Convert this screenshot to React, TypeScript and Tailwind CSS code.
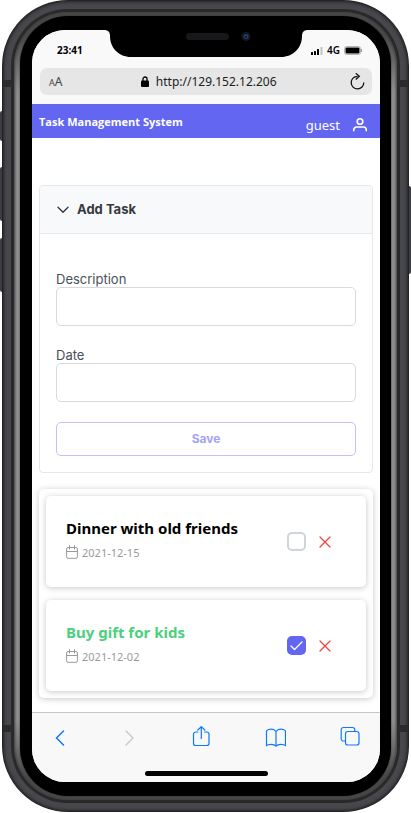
import { useState } from "react";
import type { ReactNode } from "react";

type Task = { id: number; title: string; date: string; done: boolean };

const initialTasks: Task[] = [
  { id: 1, title: "Dinner with old friends", date: "2021-12-15", done: false },
  { id: 2, title: "Buy gift for kids", date: "2021-12-02", done: true },
];

/* Black camera housing hanging from the top edge of the display. */
function Notch() {
  return (
    <svg
      className="absolute left-1/2 top-0 -translate-x-1/2"
      width="204"
      height="28"
      viewBox="0 0 204 28"
      aria-hidden="true"
    >
      <path d="M0 0h204c-4 0-6 2-6 6 0 12-9 21-21 21H27C15 27 6 18 6 6c0-4-2-6-6-6z" fill="#000" />
      <rect x="82" y="3" width="43" height="7" rx="3.5" fill="#17171a" />
      <circle cx="142" cy="6.500" r="4.500" fill="#14161c" />
      <circle cx="142" cy="6.500" r="2.500" fill="#1b3c70" />
      <circle cx="142" cy="7" r="1" fill="#0a1020" />
    </svg>
  );
}

function StatusBar() {
  return (
    <div className="flex h-[38px] items-center justify-between pt-[3px] pr-[18px] pl-[25px]">
      <span className="font-['Noto_Sans',sans-serif] text-[10px] font-bold text-black">23:41</span>
      <div className="flex items-center gap-[4px]">
        <svg width="12" height="8" viewBox="0 0 12 8" aria-hidden="true">
          <rect x="0" y="5" width="2" height="3" rx=".5" fill="#000" />
          <rect x="3" y="4" width="2" height="4" rx=".5" fill="#000" />
          <rect x="6" y="2" width="2" height="6" rx=".5" fill="#000" />
          <rect x="9.500" y="0" width="2" height="8" rx=".5" fill="#c4c4c4" />
        </svg>
        <span className="font-['Noto_Sans',sans-serif] text-[10px] font-semibold text-black">4G</span>
        <svg width="18" height="9" viewBox="0 0 18 9" aria-hidden="true">
          <rect x=".5" y=".5" width="16" height="8" rx="2" fill="#fff" stroke="#b5b5b5" />
          <rect x="1.500" y="1.500" width="14" height="6" rx="1" fill="#000" />
          <path d="M17.500 3v3" stroke="#999" />
        </svg>
      </div>
    </div>
  );
}

function AddressBar() {
  return (
    <div className="px-[8px] pb-[9px]">
      <div className="flex h-[27px] items-center justify-between rounded-[7px] bg-[#e6e6e6] pr-[6px] pl-[9px] font-['Noto_Sans',sans-serif] text-[#222]">
        <button type="button" aria-label="Text size" className="flex items-baseline leading-none text-[#444]">
          <span className="text-[9px]">A</span>
          <span className="text-[12px]">A</span>
        </button>
        <div className="flex items-center gap-[7px] pl-[6px]">
          <svg width="8" height="11" viewBox="0 0 8 11" aria-hidden="true">
            <path d="M2 5V3a2 2 0 0 1 4 0v2" fill="none" stroke="#000" strokeWidth="1.300" />
            <rect y="4.500" width="8" height="6.500" rx="1" fill="#000" />
          </svg>
          <span className="text-[12px]">http://129.152.12.206</span>
        </div>
        <button type="button" aria-label="Reload">
          <svg width="17" height="18" viewBox="0 0 17 18" fill="none" stroke="#111" strokeWidth="1.300" aria-hidden="true">
            <path d="M8.500 3.300A6.300 6.300 0 1 0 14.800 9.500" />
            <path d="M6.800.300l3.500 3-3.500 3.200" />
          </svg>
        </button>
      </div>
    </div>
  );
}

function AppHeader() {
  return (
    <header className="flex h-[34px] justify-between bg-[#6366f1] pr-[12px] pl-[7px] font-['Noto_Sans',sans-serif] text-white">
      <h1 className="pt-[9px] font-['Open_Sans',sans-serif] text-[11px] leading-[18px] font-bold">Task Management System</h1>
      <div className="flex items-center gap-[12px] pt-[7px]">
        <span className="text-[13px] leading-[18px]">guest</span>
        <svg width="16" height="16" viewBox="0 0 16 16" fill="none" stroke="#fff" strokeWidth="1.600" strokeLinecap="round" aria-hidden="true">
          <circle cx="8" cy="4.500" r="2.800" />
          <path d="M1.700 13.800v-.8a3 3 0 0 1 3-3h6.600a3 3 0 0 1 3 3v.8" />
        </svg>
      </div>
    </header>
  );
}

function Field({ id, label }: { id: string; label: string }) {
  return (
    <div>
      <label htmlFor={id} className="block text-[13px] leading-[16px] text-[#495057]">
        {label}
      </label>
      <input
        id={id}
        type="text"
        className="block h-[39px] w-full rounded-[5px] border border-[#d6dade] bg-white px-3 text-[13px] text-[#495057] outline-none"
      />
    </div>
  );
}

function AddTaskPanel() {
  const [open, setOpen] = useState(true);
  return (
    <section className="rounded-[4px] border border-[#e5e7eb] font-[Inter,sans-serif]">
      <button
        type="button"
        aria-expanded={open}
        onClick={() => setOpen(!open)}
        className="flex h-[48px] w-full items-center gap-[8px] rounded-t-[4px] border-b border-[#e5e7eb] bg-[#f8f9fa] px-[17px] text-[13px] font-bold text-[#343a40]"
      >
        <svg width="12" height="8" viewBox="0 0 12 8" fill="none" stroke="#343a40" strokeWidth="1.400" strokeLinecap="round" strokeLinejoin="round" aria-hidden="true">
          <path d="M1 1.200l5 5 5-5" />
        </svg>
        Add Task
      </button>
      {open && (
        <form className="px-[16px] pt-[37px] pb-[16px]" onSubmit={(e) => e.preventDefault()}>
          <div className="flex flex-col gap-[21px]">
            <Field id="description" label="Description" />
            <Field id="date" label="Date" />
          </div>
          <button
            type="submit"
            className="mt-[20px] block h-[34px] w-full rounded-[5px] border border-[#c1c2f9] bg-white text-[12px] font-bold text-[#a1a3f7]"
          >
            Save
          </button>
        </form>
      )}
    </section>
  );
}

function TaskCard({ task, onToggle, onRemove }: { task: Task; onToggle: () => void; onRemove: () => void }) {
  return (
    <li className="flex h-[91px] items-center justify-between rounded-[5px] bg-white pr-[35px] pl-[20px] font-['Noto_Sans',sans-serif] shadow-[0_1px_6px_rgba(0,0,0,0.22)]">
      <div className="pb-[2px]">
        <h2 className={task.done ? "text-[15px] leading-[24px] font-bold text-[#4cd07d]" : "text-[15px] leading-[24px] font-bold text-black"}>
          {task.title}
        </h2>
        <p className="flex items-center gap-[4px] pt-[1px] text-[11px] leading-[24px] text-[#9a9a9a]">
          <svg className="-mt-[3px]" width="12" height="14" viewBox="0 0 12 14" fill="none" stroke="#999" strokeLinecap="round" aria-hidden="true">
            <rect x=".6" y="2.500" width="10.800" height="10.800" rx="1.500" />
            <path d="M.6 6.500h10.800M3.500.600v3.400M8.500.600v3.400" />
          </svg>
          {task.date}
        </p>
      </div>
      <div className="flex items-center gap-[13px]">
        <div className="relative size-[19px]">
          <input
            type="checkbox"
            aria-label={`Done: ${task.title}`}
            checked={task.done}
            onChange={onToggle}
            className="peer block size-[19px] appearance-none rounded-[5px] border-2 border-[#ced4da] bg-white checked:border-[#6366f1] checked:bg-[#6366f1]"
          />
          <svg
            className="pointer-events-none absolute inset-0 hidden peer-checked:block"
            width="19"
            height="19"
            viewBox="0 0 19 19"
            fill="none"
            stroke="#fff"
            strokeWidth="1.300"
            strokeLinecap="round"
            strokeLinejoin="round"
            aria-hidden="true"
          >
            <path d="M4 10l3.500 3.500L15 6" />
          </svg>
        </div>
        <button type="button" aria-label={`Remove ${task.title}`} onClick={onRemove}>
          <svg width="12" height="12" viewBox="0 0 12 12" stroke="#ef4444" strokeWidth="1.300" strokeLinecap="round" aria-hidden="true">
            <path d="M1 1l10 10M11 1L1 11" />
          </svg>
        </button>
      </div>
    </li>
  );
}

function ToolButton({ label, disabled, children }: { label: string; disabled?: boolean; children: ReactNode }) {
  return (
    <button type="button" aria-label={label} disabled={disabled} className={disabled ? "text-[#c6c6c8]" : "text-[#0a7aff]"}>
      {children}
    </button>
  );
}

function BrowserToolbar() {
  return (
    <footer className="border-t border-[#c5c5c5] bg-[#f8f8f8] pb-[6px]">
      <nav className="flex h-[48px] items-center justify-between pr-[20px] pl-[23px]">
        <ToolButton label="Back">
          <svg width="15" height="22" viewBox="0 0 15 22" fill="none" stroke="currentColor" strokeWidth="1.500" strokeLinecap="round">
            <path d="M8.500 5L1.500 12l7 7" />
          </svg>
        </ToolButton>
        <ToolButton label="Forward" disabled>
          <svg width="14" height="22" viewBox="0 0 14 22" fill="none" stroke="currentColor" strokeWidth="1.300" strokeLinecap="round">
            <path d="M2 5l7 7-7 7" />
          </svg>
        </ToolButton>
        <ToolButton label="Share">
          <svg width="20" height="22" viewBox="0 0 20 22" fill="none" stroke="currentColor" strokeWidth="1.200" strokeLinecap="round" strokeLinejoin="round">
            <path d="M6 6H3.800A2.300 2.300 0 0 0 1.500 8.300v8.900a2.300 2.300 0 0 0 2.300 2.300h10.900a2.300 2.300 0 0 0 2.300-2.300V8.300A2.300 2.300 0 0 0 14.700 6H12.500" />
            <path d="M9.300 12.500V.800M5.800 4l3.500-3.400L12.800 4" />
          </svg>
        </ToolButton>
        <ToolButton label="Bookmarks">
          <svg width="21" height="22" viewBox="0 0 21 22" fill="none" stroke="currentColor" strokeWidth="1.200" strokeLinejoin="round">
            <path d="M11 5.500C9.700 3.600 8.200 3.200 6.300 3.200S2.500 3.800 1.500 4.800v14.900c1-1 2.500-1.400 4.800-1.400 1.900 0 3.600.500 4.700 1.800 1.100-1.300 2.800-1.800 4.700-1.800 2.300 0 3.800.400 4.800 1.400V4.800c-1-1-2.900-1.600-4.800-1.600s-3.400.400-4.700 2.300zM11 5.500v14" />
          </svg>
        </ToolButton>
        <ToolButton label="Tabs">
          <svg width="20" height="22" viewBox="0 0 20 22" fill="none" stroke="currentColor" strokeWidth="1.200" strokeLinejoin="round">
            <rect x="5.500" y="5.500" width="13.500" height="13.500" rx="2.300" />
            <path d="M5.500 15H3.500A2.300 2.300 0 0 1 1.200 12.700V3.800A2.300 2.300 0 0 1 3.500 1.500h9a2.300 2.300 0 0 1 2.300 2.300V5.500" />
          </svg>
        </ToolButton>
      </nav>
      <div className="mx-auto mt-[10px] h-[5px] w-[123px] rounded-full bg-black" />
    </footer>
  );
}

/* Metal rim with its keys and antenna lines around the black bezel. */
function Phone({ children }: { children: ReactNode }) {
  return (
    <div className="relative px-[2px]">
      <div className="absolute top-[111px] left-0 h-[30px] w-[4px] rounded-l-[2px] bg-[#3b3d42]" />
      <div className="absolute top-[167px] left-0 h-[54px] w-[4px] rounded-l-[2px] bg-[#3b3d42]" />
      <div className="absolute top-[238px] left-0 h-[54px] w-[4px] rounded-l-[2px] bg-[#3b3d42]" />
      <div className="absolute top-[186px] right-0 h-[88px] w-[4px] rounded-r-[2px] bg-[#3b3d42]" />
      <div className="relative rounded-[66px] bg-[#232325] p-[1px]">
        <div className="rounded-[65px] bg-[#47474c] p-[8px] shadow-[inset_0_0_3px_1px_#242427]">
          <div className="rounded-[57px] bg-[#29292b] p-[3px]">
            <div className="rounded-[54px] bg-[linear-gradient(180deg,#4c4c4c_0%,#4c4c4c_3%,#929292_10%,#929292_90%,#4c4c4c_97%,#4c4c4c_100%)] px-[6px] py-[4px] shadow-[inset_0_0_3px_1px_#3c3c3c]">
              <div className="rounded-[48px] bg-black pt-[14px] pr-[11px] pb-[14px] pl-[12px] shadow-[0_0_2px_0_#222]">
                {children}
              </div>
            </div>
          </div>
        </div>
        <div className="absolute top-[80px] left-[1px] h-[7px] w-[9px] bg-[#2b2b2d]" />
        <div className="absolute top-[80px] right-[1px] h-[7px] w-[9px] bg-[#2b2b2d]" />
        <div className="absolute bottom-[80px] left-[1px] h-[7px] w-[9px] bg-[#2b2b2d]" />
        <div className="absolute right-[1px] bottom-[80px] h-[7px] w-[9px] bg-[#2b2b2d]" />
      </div>
    </div>
  );
}

export default function App() {
  const [tasks, setTasks] = useState(initialTasks);
  const toggle = (id: number) => setTasks(tasks.map((t) => (t.id === id ? { ...t, done: !t.done } : t)));
  const remove = (id: number) => setTasks(tasks.filter((t) => t.id !== id));

  return (
    <div className="bg-white">
      <Phone>
        <div className="relative overflow-hidden rounded-[33px] bg-white">
          <div className="bg-[#f9f9f9]">
            <StatusBar />
            <AddressBar />
          </div>
          <Notch />
          <AppHeader />
          <main className="flex flex-col gap-[16px] px-[7px] pt-[47px] pb-[14px]">
            <AddTaskPanel />
            <ul className="flex flex-col gap-[13px] rounded-[5px] p-[7px] shadow-[0_1px_6px_rgba(0,0,0,0.22)]">
              {tasks.map((task) => (
                <TaskCard key={task.id} task={task} onToggle={() => toggle(task.id)} onRemove={() => remove(task.id)} />
              ))}
            </ul>
          </main>
          <BrowserToolbar />
        </div>
      </Phone>
    </div>
  );
}
